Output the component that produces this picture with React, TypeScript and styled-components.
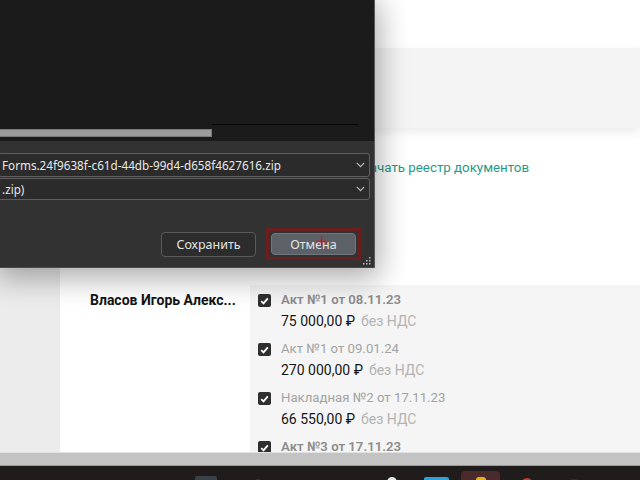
import React from "react";
import styled, { createGlobalStyle } from "styled-components";

const Global = createGlobalStyle`
  html, body { margin: 0; padding: 0; overflow: hidden; background: #ececec; }
  * { box-sizing: border-box; }
`;

const Screen = styled.div`
  position: relative;
  width: 640px;
  height: 480px;
  overflow: hidden;
  background: #ececec;
  font-family: Roboto, "Noto Sans", sans-serif;
`;

const Page = styled.div`
  display: flex;
  flex-direction: column;
  width: 640px;
`;

const Header = styled.div`
  height: 48px;
  flex-shrink: 0;
  background: #ffffff;
`;

const Band = styled.div`
  height: 80px;
  flex-shrink: 0;
  background: #f4f4f4;
  box-shadow: 0 4px 10px rgba(0, 0, 0, 0.08);
  position: relative;
  z-index: 1;
`;

const Body = styled.div`
  height: 324px;
  flex-shrink: 0;
  padding-left: 60px;
  background: #ececec;
  overflow: hidden;
`;

const Card = styled.div`
  display: flex;
  flex-direction: column;
  background: #ffffff;
  height: 100%;
`;

const LinkRow = styled.div`
  height: 157px;
  flex-shrink: 0;
  padding: 29px 0 0 294px;
`;

const Link = styled.a`
  font-size: 13.3px;
  line-height: 20px;
  color: #1f9a8a;
  text-decoration: none;
  white-space: nowrap;
`;

const Row = styled.div`
  flex: 1;
  min-height: 0;
  overflow: hidden;
  display: grid;
  grid-template-columns: 190px 1fr;
`;

const NameCol = styled.div`
  padding: 5px 0 0 30px;
`;

const Name = styled.div`
  font-size: 14px;
  font-weight: 700;
  line-height: 20px;
  color: #141414;
  white-space: nowrap;
`;

const List = styled.div`
  background: #f5f5f5;
  padding: 5px 0 0 8px;
  display: flex;
  flex-direction: column;
  gap: 8px;
`;

const Item = styled.div`
  display: grid;
  grid-template-columns: 13px 1fr;
  column-gap: 10px;
  row-gap: 1px;
`;

const Check = styled.span`
  width: 13px;
  height: 13px;
  margin-top: 4px;
  border-radius: 2px;
  background: #2f2f2f;
  display: flex;
  align-items: center;
  justify-content: center;
`;

const Title = styled.div<{ $bold?: boolean }>`
  font-size: 13.2px;
  line-height: 20px;
  font-weight: ${(p) => (p.$bold ? 600 : 400)};
  color: ${(p) => (p.$bold ? "#8c8c8c" : "#a3a3a3")};
  white-space: nowrap;
`;

const Amount = styled.div`
  grid-column: 2;
  font-size: 14px;
  line-height: 20px;
  color: #151515;
  white-space: nowrap;
`;

const Vat = styled.span`
  color: #b3b3b3;
  margin-left: 6px;
`;

const ScrollStrip = styled.div`
  height: 14px;
  flex-shrink: 0;
  background: #c3c3c3;
  border-top: 1px solid #e2e2e2;
  border-bottom: 1px solid #9a9a9a;
`;

const Taskbar = styled.div`
  height: 40px;
  flex-shrink: 0;
  background: #201c1c;
  display: flex;
  align-items: flex-start;
  padding-top: 4px;
`;

const TaskIcon = styled.div<{ $w: number; $h: number; $c: string; $ml: number; $top: number; $r?: number }>`
  width: ${(p) => p.$w}px;
  height: ${(p) => p.$h}px;
  background: ${(p) => p.$c};
  margin-left: ${(p) => p.$ml}px;
  margin-top: ${(p) => p.$top}px;
  border-radius: ${(p) => p.$r ?? 2}px;
  flex-shrink: 0;
`;

const ActiveTile = styled.div`
  width: 39px;
  height: 30px;
  margin-left: 12px;
  margin-top: 1px;
  border-radius: 4px;
  background: #4a2a2a;
  display: flex;
  justify-content: center;
  padding-top: 4px;
`;

/* Dialog */
const Dialog = styled.div`
  position: absolute;
  left: 0;
  top: 0;
  width: 375px;
  height: 268px;
  display: flex;
  flex-direction: column;
  background: #323232;
  border-right: 1px solid #5a5a5a;
  border-bottom: 1px solid #4a4a4a;
  box-shadow: 0 6px 28px 4px rgba(0, 0, 0, 0.33);
  font-family: "Noto Sans", "Open Sans", sans-serif;
  z-index: 5;
`;

const Browser = styled.div`
  height: 141px;
  flex-shrink: 0;
  background: #1b1b1b;
  display: flex;
  flex-direction: column;
  justify-content: flex-end;
  padding-bottom: 4px;
`;

const Rule = styled.div`
  height: 1px;
  width: 146px;
  margin-left: 212px;
  margin-bottom: 4px;
  background: #050505;
`;

const Thumb = styled.div`
  height: 8px;
  width: 212px;
  background: #9b9b9b;
  border: 1px solid #7a7a7a;
  border-left: none;
`;

const Footer = styled.div`
  flex: 1;
  position: relative;
  display: flex;
  flex-direction: column;
  padding: 12px 0 0 0;
`;

const Combo = styled.div<{ $h: number }>`
  height: ${(p) => p.$h}px;
  flex-shrink: 0;
  margin: 0 4px 1px -2px;
  border: 1px solid #5e5e5e;
  border-radius: 3px;
  background: #2b2b2b;
  display: flex;
  align-items: center;
  justify-content: space-between;
  padding: 0 4px 0 3px;
  color: #e8e8e8;
  font-size: 11.7px;
  white-space: nowrap;
`;

const Buttons = styled.div`
  margin-top: 27px;
  display: flex;
  justify-content: flex-end;
  align-items: center;
  gap: 10px;
  padding-right: 13px;
`;

const Button = styled.button`
  width: 95px;
  height: 25px;
  border: 1px solid #5a5a5a;
  border-radius: 4px;
  background: #2c2c2c;
  color: #e4e4e4;
  font-family: "Noto Sans", "Open Sans", sans-serif;
  font-size: 12.5px;
  padding: 0;
`;

const FocusFrame = styled.div`
  border: 3px solid #6b1e1e;
  padding: 2px;
  display: flex;
`;

const DefaultButton = styled(Button)`
  width: 85px;
  height: 22px;
  background: #5b6166;
  border-color: #70767b;
`;

const Grip = styled.svg`
  position: absolute;
  right: 3px;
  bottom: 2px;
`;

const Cursor = styled.svg`
  position: absolute;
  left: 316px;
  top: 236px;
  z-index: 6;
`;

const Chevron = () => (
  <svg width="9" height="6" viewBox="0 0 9 6">
    <path d="M0.8 0.8 L4.5 4.6 L8.2 0.8" fill="none" stroke="#bdbdbd" strokeWidth="1.1" />
  </svg>
);

const Tick = () => (
  <svg width="9" height="8" viewBox="0 0 9 8">
    <path d="M1.2 4.2 L3.5 6.4 L7.8 1.4" fill="none" stroke="#ffffff" strokeWidth="1.8" />
  </svg>
);

const items: { title: string; amount?: string; bold: boolean }[] = [
  { title: "Акт №1 от 08.11.23", amount: "75 000,00 ₽", bold: true },
  { title: "Акт №1 от 09.01.24", amount: "270 000,00 ₽", bold: false },
  { title: "Накладная №2 от 17.11.23", amount: "66 550,00 ₽", bold: false },
  { title: "Акт №3 от 17.11.23", bold: true },
];

export default function App() {
  return (
    <Screen>
      <Global />
      <Page>
        <Header />
        <Band />
        <Body>
          <Card>
            <LinkRow>
              <Link href="#">Скачать реестр документов</Link>
            </LinkRow>
            <Row>
              <NameCol>
                <Name>Власов Игорь Алекс...</Name>
              </NameCol>
              <List>
                {items.map((it) => (
                  <Item key={it.title}>
                    <Check>
                      <Tick />
                    </Check>
                    <Title $bold={it.bold}>{it.title}</Title>
                    {it.amount && (
                      <Amount>
                        {it.amount}
                        <Vat>без НДС</Vat>
                      </Amount>
                    )}
                  </Item>
                ))}
              </List>
            </Row>
          </Card>
        </Body>
        <ScrollStrip />
        <Taskbar>
          <TaskIcon $w={22} $h={20} $c="#3a4149" $ml={195} $top={6} />
          <TaskIcon $w={10} $h={12} $c="#5a2222" $ml={36} $top={9} $r={5} />
          <TaskIcon $w={8} $h={10} $c="#2e2a2a" $ml={26} $top={10} $r={4} />
          <TaskIcon $w={10} $h={12} $c="#e8e8e8" $ml={90} $top={7} $r={6} />
          <TaskIcon $w={25} $h={16} $c="#2ba2da" $ml={27} $top={7} />
          <ActiveTile>
            <TaskIcon $w={10} $h={12} $c="#e2b21c" $ml={0} $top={2} $r={3} />
          </ActiveTile>
          <TaskIcon $w={12} $h={12} $c="#d2372b" $ml={21} $top={8} $r={6} />
          <TaskIcon $w={14} $h={12} $c="#5e1c1c" $ml={34} $top={9} $r={6} />
        </Taskbar>
      </Page>

      <Dialog>
        <Browser>
          <Rule />
          <Thumb />
        </Browser>
        <Footer>
          <Combo $h={24}>
            <span>Forms.24f9638f-c61d-44db-99d4-d658f4627616.zip</span>
            <Chevron />
          </Combo>
          <Combo $h={22}>
            <span>.zip)</span>
            <Chevron />
          </Combo>
          <Buttons>
            <Button>Сохранить</Button>
            <FocusFrame>
              <DefaultButton>Отмена</DefaultButton>
            </FocusFrame>
          </Buttons>
          <Grip width="8" height="8" viewBox="0 0 8 8">
            <g fill="#bdbdbd">
              <rect x="6" y="0" width="1.5" height="1.5" />
              <rect x="3" y="3" width="1.5" height="1.5" />
              <rect x="6" y="3" width="1.5" height="1.5" />
              <rect x="0" y="6" width="1.5" height="1.5" />
              <rect x="3" y="6" width="1.5" height="1.5" />
              <rect x="6" y="6" width="1.5" height="1.5" />
            </g>
          </Grip>
        </Footer>
      </Dialog>
      <Cursor width="11" height="11" viewBox="0 0 11 11">
        <path d="M5.5 0 V11 M0 5.5 H11" stroke="#e0101a" strokeWidth="1.3" />
      </Cursor>
    </Screen>
  );
}
